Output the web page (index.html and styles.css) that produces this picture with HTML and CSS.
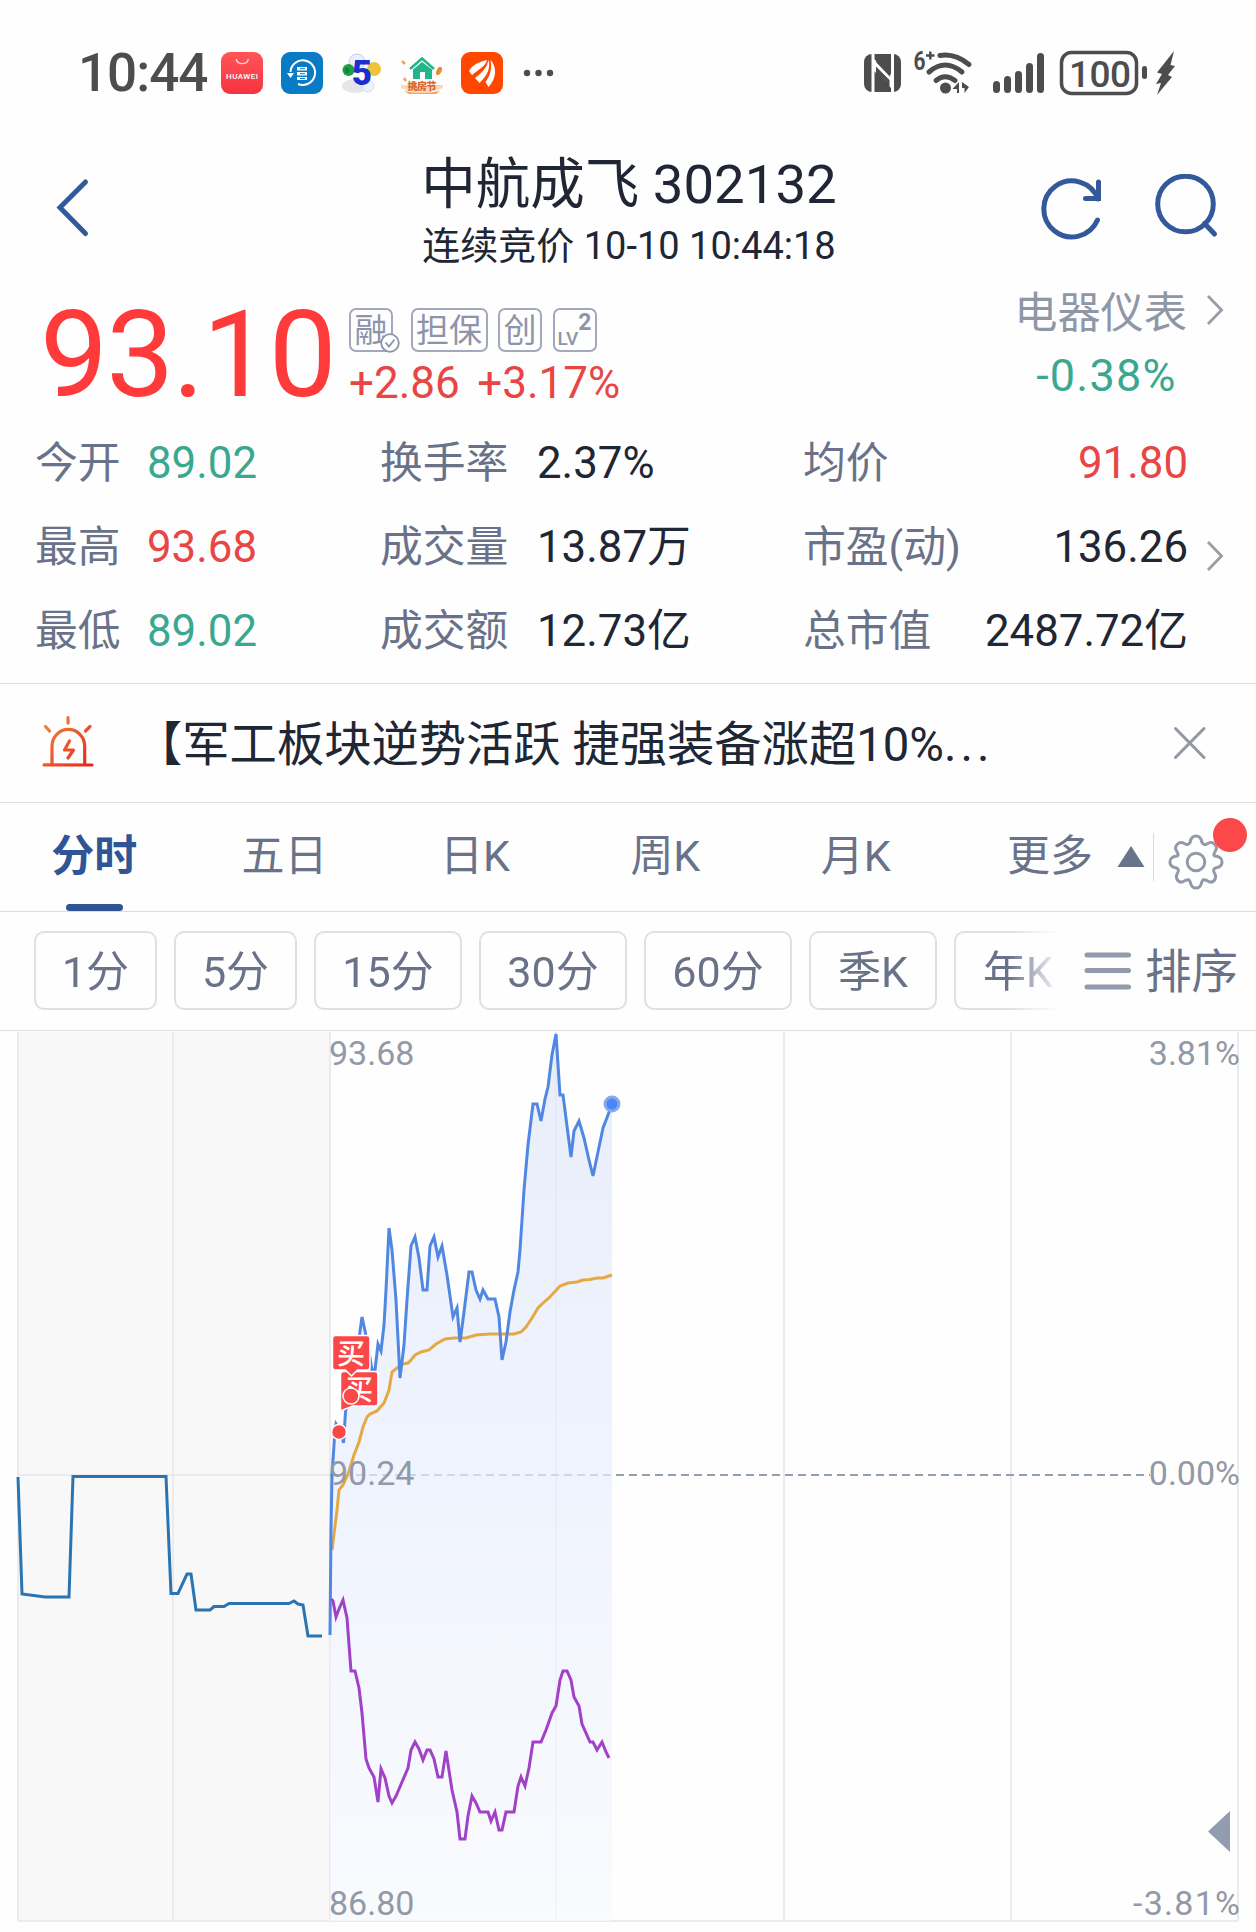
FILE: index.html
```html
<!DOCTYPE html>
<html lang="zh-CN">

<head>
    <meta charset="UTF-8">
    <meta name="viewport" content="width=device-width, initial-scale=1.0">
    <title>中航成飞 302132</title>
    <link rel="stylesheet" href="styles.css">
</head>

<body>
    <div id="main">
        <!-- 状态栏 -->
        <div class="status-bar">
            <span class="clock">10:44</span>
            <div class="apps">
                <svg width="42" height="42" viewBox="0 0 42 42">
                    <defs>
                        <linearGradient id="hw" x1="0" y1="0" x2="0" y2="1">
                            <stop offset="0" stop-color="#ff5557" />
                            <stop offset="1" stop-color="#f5333f" />
                        </linearGradient>
                    </defs>
                    <rect width="42" height="42" rx="9" fill="url(#hw)" />
                    <path d="M15 7a6.5 6.5 0 0 0 12.500 0" fill="none" stroke="#ffd5d5" stroke-width="1.300" />
                    <text x="21" y="27" class="hw-text" textLength="32">HUAWEI</text>
                </svg>
                <svg width="42" height="42" viewBox="0 0 42 42">
                    <rect width="42" height="42" rx="9" fill="#087bc4" />
                    <path d="M9.500 20A12.300 12.300 0 1 1 17 32" fill="none" stroke="#fff" stroke-width="2" />
                    <path d="M6 21h7l-3.500 5z" fill="#fff" />
                    <path d="M16 15h10v3.500H16zM16 20h10v3.500H16zM16 25h10v3H16z" fill="#fff" />
                    <path d="M19 16.700h5M19 21.700h5M19 26.500h5" stroke="#087bc4" stroke-width="1" />
                </svg>
                <svg width="42" height="42" viewBox="0 0 42 42">
                    <ellipse cx="14" cy="34" rx="13" ry="7" fill="#e4e6ea" />
                    <circle cx="16" cy="10" r="8" fill="#e8eefb" stroke="#c3cff0" />
                    <circle cx="33" cy="17" r="7" fill="#f3c23c" />
                    <circle cx="7.500" cy="18" r="6" fill="#1c9f3c" />
                    <circle cx="27" cy="34" r="6" fill="#eef2fd" stroke="#d5dcf3" />
                    <text x="21" y="33" class="five-text">5</text>
                    <text x="6" y="21" class="ball-text">8</text>
                </svg>
                <svg width="42" height="42" viewBox="0 0 42 42">
                    <path d="M0 36q21 10 42 0v-3H0z" fill="#fbd9b8" />
                    <path d="M3 39q18 4 36 0l-4 3H8z" fill="#f6a15c" />
                    <path d="M9 17L21 6.500L33 17" fill="none" stroke="#21b58a" stroke-width="2.500" />
                    <path d="M12 17.500L21 10l10 7.500V27h-7v-7h-5v7h-7z" fill="#21b58a" />
                    <ellipse cx="38" cy="19" rx="2.500" ry="4.500" fill="#e58a3a" transform="rotate(25 38 19)" />
                    <path d="M1 9l3 3M3 26l2 3" stroke="#f0a25a" stroke-width="2.500" />
                    <text x="21" y="38" class="house-text" textLength="29">挑房节</text>
                </svg>
                <svg width="42" height="42" viewBox="0 0 42 42">
                    <rect width="42" height="42" rx="9" fill="#ff4700" />
                    <path d="M8 19C11 13 18 10 26 8C25 14 18 17 11 23z" fill="#fff" />
                    <path d="M14 26C22 20 26 15 27.500 8C30 16 26 24 18.500 31z" fill="#fff" />
                    <path d="M29.500 8C36 15 36 26 27.500 35L24.500 30C30 23 31 15 29.500 8z" fill="#fff" />
                </svg>
                <svg class="dots" width="32" height="8" viewBox="0 0 32 8">
                    <circle cx="4" cy="4" r="3.200" />
                    <circle cx="15.500" cy="4" r="3.200" />
                    <circle cx="27" cy="4" r="3.200" />
                </svg>
            </div>
            <svg class="signals" width="314" height="62" viewBox="862 41 314 62">
                <!-- NFC -->
                <rect x="864" y="53" width="37" height="38" rx="8" />
                <path d="M873 91V53M892.500 53V91" class="line-w" />
                <path d="M874 58L891 74V87L874 70z" fill="#fff" />
                <path d="M877.500 89V69L888 79.500V84L877.500 73M888.500 55V72L877 60" class="line-d" />
                <!-- wifi -->
                <text x="913.500" y="69" class="six" textLength="12" lengthAdjust="spacingAndGlyphs">6</text>
                <path d="M926 54.500h8.500M930.300 50.500v8" class="line-b" />
                <path d="M940 54.500Q955 52 969 63.500M929 71Q945 57 962 71M936 79.500Q945 72 955 79.500" class="arc" />
                <circle cx="945.500" cy="87" r="5.500" />
                <path d="M952.500 88l6.500-7v11h-2v-4zM962 81l7 5l-4.500 6v-5h-2.500z" />
                <!-- 信号 -->
                <rect x="993" y="80" width="7" height="12" rx="3.500" />
                <rect x="1004" y="75" width="7" height="17" rx="3.500" />
                <rect x="1015" y="70" width="7" height="22" rx="3.500" />
                <rect x="1026" y="62" width="7" height="30" rx="3.500" />
                <rect x="1037" y="52" width="7" height="40" rx="3.500" />
                <!-- 电池 -->
                <rect x="1061.500" y="51.500" width="75" height="41" rx="10" class="battery" />
                <rect x="1142" y="65" width="5" height="13" rx="2.500" />
                <text x="1100" y="86" class="level" textLength="62">100</text>
                <path d="M1174 50L1157 71.500L1162 73L1156 83L1161 82L1157 94L1172 76L1168 74L1175 65L1170.500 64z" />
            </svg>
        </div>

        <!-- 标题 -->
        <div class="header">
            <svg class="back" width="34" height="60" viewBox="56 178 34 60">
                <path d="M85.500 182L60 207.500L85.500 233.500" class="blue-line" />
            </svg>
            <div class="title">
                <h1>中航成飞 302132</h1>
                <p>连续竞价 10-10 10:44:18</p>
            </div>
            <svg class="actions" width="180" height="66" viewBox="1039 174 180 66">
                <path d="M1098 199A28 28 0 1 0 1097.500 220" class="blue-line" />
                <path d="M1098.500 182V198.500H1085.500" class="blue-line" />
                <circle cx="1185.500" cy="204" r="27.800" class="blue-line" />
                <path d="M1204.500 223.500L1214.500 234" class="blue-line" />
            </svg>
        </div>

        <!-- 报价 -->
        <div class="quote">
            <div class="price">93.10</div>
            <div class="quote-mid">
                <div class="tags">
                    <span class="tag checked">融
                        <svg width="20" height="20" viewBox="0 0 20 20">
                            <circle cx="10" cy="10" r="8.800" />
                            <path d="M5.500 9.500l3.500 4l5.500-7" />
                        </svg>
                    </span>
                    <span class="tag wide">担保</span>
                    <span class="tag">创</span>
                    <span class="tag lv"><i>LV</i><b>2</b></span>
                </div>
                <div class="change"><span>+2.86</span><span>+3.17%</span></div>
            </div>
            <div class="sector">
                <div class="sector-name">电器仪表
                    <svg class="arrow" width="18" height="34" viewBox="0 0 18 34"><path d="M2 3L15.500 17L2 31" /></svg>
                </div>
                <div class="sector-rate green">-0.38%</div>
            </div>
        </div>

        <!-- 指标 -->
        <div class="stats">
            <div class="stat-grid">
                <span class="label">今开</span><span class="green">89.02</span>
                <span class="label">换手率</span><span>2.37%</span>
                <span class="label">均价</span><span class="end red">91.80</span>
                <span class="label">最高</span><span class="red">93.68</span>
                <span class="label">成交量</span><span>13.87万</span>
                <span class="label">市盈(动)</span><span class="end">136.26</span>
                <span class="label">最低</span><span class="green">89.02</span>
                <span class="label">成交额</span><span>12.73亿</span>
                <span class="label">总市值</span><span class="end">2487.72亿</span>
            </div>
            <svg class="arrow" width="18" height="34" viewBox="0 0 18 34"><path d="M2 3L15.500 17L2 31" /></svg>
        </div>

        <!-- 快讯 -->
        <div class="news">
            <svg width="54" height="54" viewBox="41 714 54 54">
                <defs>
                    <linearGradient id="alarm" gradientUnits="userSpaceOnUse" x1="45" y1="720" x2="90" y2="766">
                        <stop offset="0" stop-color="#ee8a3c" />
                        <stop offset="1" stop-color="#e8261f" />
                    </linearGradient>
                </defs>
                <g fill="none" stroke="url(#alarm)" stroke-width="3.200" stroke-linecap="round">
                    <path d="M44 764.800L92 765" />
                    <path d="M52 764V746a16.300 16.500 0 0 1 32.700 0V764" />
                    <path d="M68 717.500L68.100 723M45.500 726.500L49.500 731M90 726.500L85.500 731" />
                    <path d="M69.500 741L64.500 750H73.500L68 758" stroke-linejoin="round" />
                </g>
            </svg>
            <p>【军工板块逆势活跃 捷强装备涨超10%<span>...</span></p>
            <svg class="close" width="36" height="36" viewBox="0 0 36 36"><path d="M3.500 3.500L32 32.500M32 3.500L3.500 32.500" /></svg>
        </div>

        <!-- 周期 -->
        <div class="tabs">
            <ul>
                <li class="active">分时</li>
                <li>五日</li>
                <li>日K</li>
                <li>周K</li>
                <li>月K</li>
                <li class="more">更多</li>
            </ul>
            <svg class="triangle" width="28" height="22" viewBox="0 0 28 22"><path d="M14 0L27.500 21H0.500z" /></svg>
            <div class="setting">
                <svg width="56" height="56" viewBox="-28 -28 56 56">
                    <path d="M-5.700 -20.200C-4.700 -28 4.700 -28 5.700 -20.200C6.500 -17.500 9 -16.800 10.800 -18C17 -22 23 -16 19 -10.300C17 -7 17.800 -6 20.200 -5.700C28 -4.700 28 4.700 20.200 5.700C17.500 6.500 17 8 18.200 10.500C22 17 16.500 23 10.500 18.400C8 17 6.500 17.500 5.700 20.200C4.700 28 -4.700 28 -5.700 20.200C-6.500 17.500 -8 17 -10.500 18.400C-16.500 23 -22 17 -18.200 10.500C-17 8 -17.500 6.500 -20.200 5.700C-28 4.700 -28 -4.700 -20.200 -5.700C-17.800 -6 -17 -7 -19 -10.300C-23 -16 -17 -22 -10.800 -18C-9 -16.800 -6.500 -17.500 -5.700 -20.200z" />
                    <circle r="8.800" />
                </svg>
                <i class="badge"></i>
            </div>
        </div>
        <div class="periods">
            <div class="chips">
                <span>1分</span>
                <span>5分</span>
                <span class="w2">15分</span>
                <span class="w2">30分</span>
                <span class="w2">60分</span>
                <span class="wk">季K</span>
                <span class="wk">年K</span>
            </div>
            <div class="sort">
                <svg width="48" height="40" viewBox="0 0 48 40"><path d="M3 4H44.500M3 19.500H44.500M3 36H44.500" /></svg>
                <span>排序</span>
            </div>
        </div>

        <!-- 分时图 -->
        <svg class="chart" width="1256" height="901" viewBox="0 1031 1256 901">
            <defs>
                <linearGradient id="area" x1="0" y1="0" x2="0" y2="1">
                    <stop offset="0" stop-color="#dfe7f8" />
                    <stop offset="0.500" stop-color="#e9effd" />
                    <stop offset="1" stop-color="#f7f9fe" />
                </linearGradient>
            </defs>
            <rect x="18" y="1032" width="312" height="889" fill="#f8f8f8" />
            <path class="grid" d="M18 1032V1921M173 1032V1921M330 1032V1921M556 1032V1921M784 1032V1921M1011 1032V1921M1238 1032V1921M18 1475H330M18 1921H1238" />
            <path class="dash" d="M330 1475H1150" />
            <path fill="url(#area)" opacity="0.700" d="M330 1921L330 1635L332 1475L336 1423L343 1440L350 1380L362 1317L372 1372L378 1344L381 1351L384 1325L386 1290L389 1228L392 1250L396 1300L400 1378L404 1345L407 1300L411 1246L415 1237L419 1258L423 1290H427L430 1246L434 1237L438 1257L442 1246L447 1275L453 1317L457 1308L460 1342L464 1312L469 1272H472L476 1290L480 1299L483 1290L488 1299H495L499 1317L502 1360L506 1342L510 1312L514 1290L518 1272L520 1250L524 1190L528 1145L533 1104H537L541 1121L545 1099L548 1087L552 1055L556 1034L560 1095H563L567 1126L571 1157L574 1131L579 1121L584 1138L589 1160L593 1174L598 1152L603 1128L608 1115L612 1104V1921z" />

            <!-- 竞价 -->
            <polyline class="pre" points="18,1477 22,1594 45,1597 69,1597 73,1476.500 166,1476.500 171,1593.500 178,1593.500 187,1574 191,1574 196,1610 210,1610 214,1606.500 224,1606.500 229,1603.500 289,1603.500 294,1601 298,1604 303,1605 308,1636 322,1636" />
            <!-- 均价 -->
            <polyline class="avg" points="332,1550 337,1510 339,1490 343,1485 348,1474 354,1455 359,1442 363,1427 367,1417 370,1414 377,1411 384,1403 389,1390 392,1372 397,1368 403,1364 408,1363 411,1360 415,1355 421,1352 429,1350 436,1344 445,1339 454,1338 466,1338 476,1335 490,1334 514,1334 521,1332 526,1327 532,1318 538,1308 544,1302 549,1298 560,1286 568,1283 577,1282 583,1280 590,1279.500 597,1278 603,1278 612,1275" />
            <!-- 价格 -->
            <polyline class="now" points="330,1635 331,1530 332,1475 335,1430 336,1424 341,1432 343.500,1443 345.500,1412 350,1390 356,1360 362,1317 367,1340 372,1370 375,1370 378,1344 381,1351 384,1325 386,1290 389,1228 392,1250 396,1300 400,1378 404,1345 407,1300 411,1246 415,1237 419,1258 423,1290 427,1290 430,1246 434,1237 438,1257 442,1246 447,1275 453,1317 457,1308 460,1342 464,1312 469,1272 472,1272 476,1290 480,1299 483,1290 488,1299 495,1299 499,1317 502,1360 506,1342 510,1312 514,1290 518,1272 520,1250 524,1190 528,1145 533,1104 537,1104 541,1121 545,1099 548,1087 552,1055 556,1034 560,1095 563,1095 567,1126 571,1157 574,1131 579,1121 584,1138 589,1160 593,1176 598,1152 603,1128 608,1115 612,1104" />
            <polyline class="index" points="331,1599 333,1601 336,1617 339,1609 343,1600 347,1618 351,1671 355,1671 359,1688 362,1713 366,1759 369,1768 374,1777 378,1802 381,1769 385,1778 389,1796 392,1803 396,1796 402,1782 408,1768 411,1750 415,1742 419,1749 423,1760 427,1750 430,1750 434,1759 438,1777 442,1777 446,1751 452,1790 457,1812 460,1839 465,1839 468,1816 472,1796 476,1803 480,1812 488,1812 491,1821 495,1812 499,1830 502,1830 506,1812 514,1812 518,1786 521,1777 525,1786 529,1768 533,1742 541,1742 546,1730 552,1713 556,1706 560,1680 563,1671 567,1671 571,1680 574,1697 579,1706 582,1724 590,1742 593,1742 597,1750 602,1742 606,1752 609,1758" />

            <circle cx="612" cy="1104" r="8.500" fill="#86a9ee" />
            <circle cx="612" cy="1104" r="5.500" fill="#4a86f7" />

            <!-- 买点 -->
            <g class="buy">
                <path d="M343.500 1371.500H375q3 0 3 3V1403q0 3-3 3H353L340.500 1411V1374.500q0-3 3-3z" />
                <text x="359" y="1400">买</text>
                <path d="M335.500 1335.500H367q3 0 3 3V1367q0 3-3 3H357.500L351.500 1376L345.500 1370H335.500q-3 0-3-3V1338.500q0-3 3-3z" />
                <text x="351" y="1364">买</text>
                <circle cx="351" cy="1396" r="8" />
                <circle cx="339" cy="1432" r="7.500" />
            </g>

            <g class="axis">
                <text x="329" y="1065">93.68</text>
                <text x="329" y="1485">90.24</text>
                <text x="329" y="1915">86.80</text>
                <text x="1240" y="1065" class="right">3.81%</text>
                <text x="1240" y="1485" class="right">0.00%</text>
                <text x="1240" y="1915" class="right" textLength="107">-3.81%</text>
            </g>
            <path d="M1230 1811V1852L1208 1831.500z" fill="#929cb0" />
        </svg>
    </div>
</body>

</html>
```
FILE: styles.css
```css
html,
body,
div,
h1,
p,
ul,
li {
    padding: 0;
    margin: 0;
}

ul {
    list-style: none;
}

i {
    font-style: normal;
}

svg {
    display: block;
    flex: none;
}

body {
    background-color: #fff;
    font-family: Roboto, "Noto Sans CJK SC", sans-serif;
    color: #202633;
}

#main {
    width: 1256px;
    height: 1932px;
    overflow: hidden;
    background-color: #fefefe;
}

.red {
    color: #e84545;
}

.green {
    color: #3aa890;
}

/* 状态栏 */
.status-bar {
    display: flex;
    align-items: center;
    height: 146px;
    padding: 0 80px 0 78px;
    box-sizing: border-box;
}

.clock {
    width: 143px;
    font-size: 53px;
    font-weight: 500;
    line-height: 62px;
    color: #4d4d4d;
    letter-spacing: -1px;
}

.apps {
    display: flex;
    align-items: center;
    gap: 18px;
}

.dots {
    fill: #4d4d4d;
    margin-left: 2px;
}

.hw-text {
    font-size: 8px;
    font-weight: 500;
    text-anchor: middle;
    fill: #fff;
}

.five-text {
    font-size: 35px;
    font-weight: 900;
    text-anchor: middle;
    fill: #1b2ed0;
}

.ball-text {
    font-size: 8px;
    text-anchor: middle;
    fill: #063;
}

.house-text {
    font-size: 10px;
    font-weight: 900;
    text-anchor: middle;
    fill: #d9662a;
}

.signals {
    margin-left: auto;
    fill: #4d4d4d;
}

.signals .line-w {
    fill: none;
    stroke: #fff;
    stroke-width: 3;
}

.signals .line-d {
    fill: none;
    stroke: #4d4d4d;
    stroke-width: 3;
}

.signals .line-b {
    fill: none;
    stroke: #4d4d4d;
    stroke-width: 2.5;
}

.signals .arc {
    fill: none;
    stroke: #4d4d4d;
    stroke-width: 5;
    stroke-linecap: round;
}

.signals .battery {
    fill: none;
    stroke: #4d4d4d;
    stroke-width: 3.5;
}

.signals .six {
    font-size: 25px;
    font-weight: 700;
}

.signals .level {
    font-size: 37px;
    font-weight: 500;
    text-anchor: middle;
}

/* 标题 */
.header {
    display: flex;
    align-items: flex-start;
    justify-content: space-between;
    height: 149px;
    padding: 8px 37px 0 56px;
    box-sizing: border-box;
}

.blue-line {
    fill: none;
    stroke: #33599b;
    stroke-width: 5;
    stroke-linecap: round;
}

.back {
    margin-top: 24px;
    margin-right: 129px;
}

.title {
    text-align: center;
    white-space: nowrap;
}

.title h1 {
    font-size: 54.5px;
    font-weight: 400;
    line-height: 60px;
}

.title p {
    margin-top: 7px;
    font-size: 38px;
    line-height: 50px;
}

.actions {
    margin-top: 20px;
}

/* 报价 */
.quote {
    display: flex;
    height: 126px;
    padding: 0 32px 0 40px;
}

.price {
    width: 309px;
    font-size: 121px;
    line-height: 121px;
    letter-spacing: -1.8px;
    color: #ff3a3a;
}

.tags {
    display: flex;
    gap: 10.5px;
    margin-top: 13px;
}

.tag {
    position: relative;
    width: 44px;
    height: 44px;
    border: 2px solid #a3a8bd;
    border-radius: 7px;
    box-sizing: border-box;
    text-align: center;
    font-size: 33px;
    line-height: 42px;
    color: #8e93aa;
}

.tag.checked {
    margin-right: 7px;
}

.tag.checked svg {
    position: absolute;
    right: -9px;
    bottom: -3px;
    fill: #fff;
    stroke: #8e93aa;
    stroke-width: 1.8;
}

.tag.wide {
    width: 77px;
}

.tag.lv {
    display: flex;
    justify-content: center;
}

.lv i {
    font-size: 19px;
    line-height: 58px;
    font-weight: 500;
}

.lv b {
    font-size: 23px;
    line-height: 25px;
}

.change {
    display: flex;
    gap: 17.5px;
    margin-top: 6px;
    font-size: 44px;
    line-height: 50px;
    color: #e84545;
}

.sector {
    margin-left: auto;
}

.sector-name {
    display: flex;
    align-items: center;
    gap: 19px;
    margin-top: -7px;
    font-size: 43.2px;
    line-height: 52px;
    color: #8f97a6;
}

.arrow {
    fill: none;
    stroke: #9a9ca6;
    stroke-width: 2.8;
}

.sector-name .arrow {
    margin-top: -9px;
}

.sector-rate {
    margin: 11px 0 0 22px;
    font-size: 45px;
    line-height: 50px;
    letter-spacing: 1.2px;
}

/* 指标 */
.stats {
    display: flex;
    align-items: center;
    height: 262px;
    padding-left: 35px;
    border-bottom: 1px solid #dcdcdf;
    font-size: 43.8px;
}

.stat-grid {
    display: grid;
    grid-template-columns: 112px 233px 157px 266px 170px 215px;
    grid-auto-rows: 84px;
    width: 1153px;
    line-height: 85px;
    margin-top: -10px;
    white-space: nowrap;
}

.stat-grid .label {
    font-size: 42.8px;
    line-height: 84px;
    color: #697289;
}

.stat-grid .end {
    text-align: right;
}

.stats .arrow {
    margin: 8px 0 0 18px;
}

/* 快讯 */
.news {
    display: flex;
    align-items: center;
    height: 118px;
    padding: 0 48px 0 41px;
    border-bottom: 1px solid #dcdcdf;
}

.news p {
    margin-left: 40px;
    padding-top: 4px;
    font-size: 47.3px;
    line-height: 60px;
    white-space: nowrap;
}

.news p span {
    letter-spacing: 4px;
}

.news > svg:first-child {
    margin-top: -4px;
}

.close {
    margin-left: auto;
    fill: none;
    stroke: #9296a5;
    stroke-width: 3;
    stroke-linecap: round;
}

/* 周期 */
.tabs {
    display: flex;
    align-items: center;
    height: 108px;
    border-bottom: 1px solid #dcdcdf;
}

.tabs ul {
    display: flex;
    width: 1111px;
    margin-left: -1px;
    font-size: 43px;
    line-height: 106px;
    color: #697289;
}

.tabs li {
    flex: none;
    width: 190.4px;
    height: 108px;
    text-align: center;
}

.tabs .active {
    display: flex;
    flex-direction: column;
    align-items: center;
    color: #2f5597;
    font-weight: 700;
}

.tabs .active::after {
    content: "";
    width: 57px;
    height: 7px;
    margin-top: -5px;
    border-radius: 4px;
    background-color: #2f5597;
}

.tabs .more {
    width: 159px;
    padding-left: 56px;
    box-sizing: border-box;
    text-align: left;
}

.triangle {
    margin-left: 7px;
    fill: #69748b;
}

.setting {
    position: relative;
    display: flex;
    align-items: center;
    height: 48px;
    margin-left: 8px;
    padding-left: 14px;
    border-left: 1px solid #dcdcdf;
}

.setting svg {
    margin-top: 9px;
    fill: none;
    stroke: #9299a8;
    stroke-width: 3;
}

.badge {
    position: absolute;
    left: 59px;
    top: -15px;
    width: 34px;
    height: 34px;
    border-radius: 50%;
    background-color: #fc4848;
}

.periods {
    display: flex;
    height: 119px;
    padding: 19px 0 0 34px;
    box-sizing: border-box;
    border-bottom: 1px solid #dcdcdf;
    color: #697289;
}

.chips {
    display: flex;
    gap: 17px;
    width: 1026px;
    overflow: hidden;
    font-size: 43px;
    line-height: 79px;
    -webkit-mask-image: linear-gradient(to right, #000 975px, transparent 1026px);
    mask-image: linear-gradient(to right, #000 975px, transparent 1026px);
}

.chips span {
    flex: none;
    width: 123px;
    height: 79px;
    border: 2px solid #dfe0e5;
    border-radius: 10px;
    box-sizing: border-box;
    text-align: center;
}

.chips .w2 {
    width: 148px;
}

.chips .wk {
    width: 128px;
}

.sort {
    display: flex;
    align-items: center;
    gap: 13px;
    height: 79px;
    margin-left: 24px;
    font-size: 46.5px;
    line-height: 60px;
    white-space: nowrap;
}

.sort span {
    margin-top: 2px;
}

.sort svg {
    stroke: #929aab;
    stroke-width: 5;
    stroke-linecap: round;
}

/* 分时图 */
.chart polyline {
    fill: none;
    stroke-width: 3;
}

.chart .grid {
    fill: none;
    stroke: #ebebed;
    stroke-width: 2;
}

.chart .dash {
    stroke: #929fae;
    stroke-width: 2;
    stroke-dasharray: 8 5;
}

.chart .pre {
    stroke: #2a74b2;
}

.chart .avg {
    stroke: #e5a943;
}

.chart .now {
    stroke: #5087e2;
}

.chart .index {
    stroke: #a041c8;
}

.buy path,
.buy circle {
    fill: #fa4848;
    stroke: #fff;
    stroke-width: 1.5;
}

.buy text {
    font-size: 28px;
    font-weight: 500;
    text-anchor: middle;
    fill: #fff;
}

.axis {
    font-size: 34px;
    fill: #9299a7;
}

.axis .right {
    text-anchor: end;
}
```
